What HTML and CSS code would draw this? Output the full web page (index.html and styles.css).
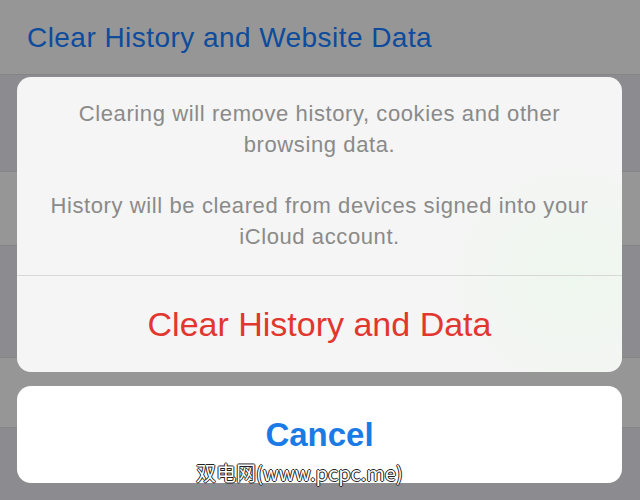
FILE: index.html
```html
<!DOCTYPE html>
<html lang="en">
<head>
    <meta charset="UTF-8">
    <meta name="viewport" content="width=device-width, initial-scale=1.0">
    <title>Clear History</title>
    <link rel="stylesheet" href="styles.css">
</head>
<body>
    <div class="screen">
        <div class="settings">
            <div class="row row-light row-title">Clear History and Website Data</div>
            <div class="row row-dark row-a"></div>
            <div class="row row-light row-b"></div>
            <div class="row row-dark row-c"></div>
            <div class="row row-light row-d"></div>
            <div class="row row-dark row-e"></div>
        </div>

        <div class="action-sheet">
            <div class="sheet-group">
                <div class="sheet-message">
                    <p>Clearing will remove history, cookies and other<br>browsing data.</p>
                    <p>History will be cleared from devices signed into your<br>iCloud account.</p>
                </div>
                <button class="sheet-button destructive">Clear History and Data</button>
            </div>
            <div class="sheet-group">
                <button class="sheet-button cancel">Cancel</button>
            </div>
        </div>

        <div class="watermark">双电网(www.pcpc.me)</div>
    </div>
</body>
</html>
```

FILE: styles.css
```css
body {
    margin: 0;
    background-color: #8c8c90;
    font-family: 'Liberation Sans', Arial, sans-serif;
}
.screen {
    position: relative;
    width: 640px;
    height: 500px;
    overflow: hidden;
}
.settings {
    display: flex;
    flex-direction: column;
}
.row {
    border-bottom: 1px solid #858589;
}
.row-light {
    background-color: #969696;
}
.row-dark {
    background-color: #8c8c90;
}
.row-title {
    height: 74px;
    padding-left: 27px;
    font-size: 28px;
    letter-spacing: 0.45px;
    line-height: 76px;
    color: #0d4b9d;
}
.row-a {
    height: 96px;
}
.row-b {
    height: 73px;
}
.row-c {
    height: 111px;
}
.row-d {
    height: 69px;
}
.row-e {
    height: 72px;
    border-bottom: none;
}

/* sheet sits over the dimmed list */
.action-sheet {
    position: absolute;
    left: 17px;
    right: 18px;
    bottom: 17px;
    display: flex;
    flex-direction: column;
    gap: 14px;
}
.sheet-group {
    background-color: #f5f5f5;
    border-radius: 14px;
    overflow: hidden;
    display: flex;
    flex-direction: column;
}
.sheet-group:first-child {
    background: radial-gradient(ellipse 120px 110px at 555px 200px, #eef7ee, #f4f5f4 100%);
}
.sheet-message {
    padding: 22px 4px 23px;
    border-bottom: 1px solid #d8d8d8;
    text-align: center;
    color: #8a8a8a;
    font-size: 22px;
    letter-spacing: 0.6px;
    line-height: 30.5px;
}
.sheet-message p {
    margin: 0;
}
.sheet-message p + p {
    margin-top: 31px;
}
.sheet-button {
    border: none;
    background: none;
    padding: 0;
    font-family: inherit;
    cursor: pointer;
}
.destructive {
    height: 96px;
    font-size: 34px;
    color: #e2362f;
}
.cancel {
    height: 97px;
    background-color: #fff;
    font-size: 33px;
    font-weight: bold;
    color: #1a7ae6;
}
.watermark {
    position: absolute;
    left: 196px;
    top: 458px;
    font-family: 'Noto Sans CJK SC', sans-serif;
    font-size: 20px;
    color: #fff;
    text-shadow: 1px 0 #222, -1px 0 #222, 0 1px #222, 0 -1px #222;
}
```
